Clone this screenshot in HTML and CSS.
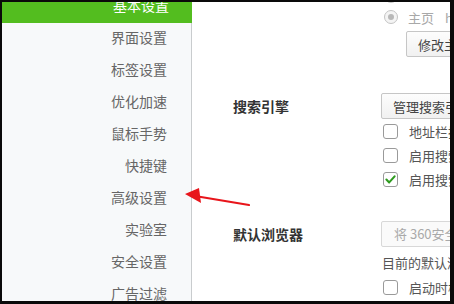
FILE: index.html
```html
<!DOCTYPE html>
<html lang="zh-CN">
<head>
<meta charset="utf-8">
<title>设置</title>
<link rel="stylesheet" href="styles.css">
</head>
<body>
<div class="screen">
  <nav class="sidebar">
    <ul class="menu">
      <li class="item active">基本设置</li>
      <li class="item">界面设置</li>
      <li class="item">标签设置</li>
      <li class="item">优化加速</li>
      <li class="item">鼠标手势</li>
      <li class="item">快捷键</li>
      <li class="item">高级设置</li>
      <li class="item">实验室</li>
      <li class="item">安全设置</li>
      <li class="item">广告过滤</li>
    </ul>
  </nav>
  <main class="main">
    <section class="row home">
      <div class="label"></div>
      <div class="controls">
        <div class="opt opt-cut"><span class="radio"></span></div>
        <div class="opt"><span class="radio on"></span><span class="opt-text muted">主页</span><span class="url muted">https://hao.360.cn/</span></div>
        <button class="btn btn-indent">修改主页</button>
      </div>
    </section>
    <section class="row search">
      <div class="label">搜索引擎</div>
      <div class="controls">
        <button class="btn">管理搜索引擎</button>
        <div class="opt"><span class="check"></span><span class="opt-text">地址栏搜索时显示搜索建议</span></div>
        <div class="opt"><span class="check"></span><span class="opt-text">启用搜索栏</span></div>
        <div class="opt"><span class="check"><svg viewBox="0 0 15 15" width="15" height="15"><path d="M3.4 7.6 L6.2 10.4 L11.6 4.4" fill="none" stroke="#2e9b1f" stroke-width="2.1" stroke-linecap="round" stroke-linejoin="round"/></svg></span><span class="opt-text">启用搜索建议</span></div>
      </div>
    </section>
    <section class="row browser">
      <div class="label">默认浏览器</div>
      <div class="controls">
        <div class="field">将 360安全浏览器设置为默认浏览器</div>
        <div class="note">目前的默认浏览器是 360安全浏览器</div>
        <div class="opt"><span class="check"></span><span class="opt-text">启动时检查是否为默认浏览器</span></div>
      </div>
    </section>
  </main>
  <svg class="arrow" width="260" height="220" viewBox="0 0 260 220">
    <line x1="193" y1="194" x2="247" y2="203" stroke="#e8151b" stroke-width="2.2" stroke-linecap="round"/>
    <polygon points="183,192 197,186 199,201" fill="#e8151b"/>
  </svg>
</div>
</body>
</html>
```

FILE: styles.css
```css
* { box-sizing: border-box; }
html, body { margin: 0; padding: 0; background: #0a0a0a; }
body { font-family: "Noto Sans CJK SC", "Liberation Sans", sans-serif; }

.screen {
  position: relative;
  width: 454px;
  height: 304px;
  border-style: solid;
  border-color: #0a0a0a;
  border-width: 2px 4px 3px 2px;
  background: #fff;
  display: flex;
  overflow: hidden;
}

.sidebar {
  width: 190px;
  flex: none;
  background: #f7f9fa;
  border-right: 1px solid #c9ccce;
}
.menu {
  list-style: none;
  margin: -13px 0 0 0;
  padding: 0;
}
.item {
  height: 32px;
  line-height: 32px;
  padding-right: 24px;
  text-align: right;
  font-size: 14px;
  color: #666;
  white-space: nowrap;
}
.item.active {
  background: #53bd1f;
  color: #fff;
  margin-right: -1px;
  padding-right: 23px;
  height: 34px;
  line-height: 32px;
  margin-bottom: -2px;
}

.main {
  flex: 1;
  min-width: 0;
  padding-left: 41px;
  display: flex;
  flex-direction: column;
}
.row {
  display: grid;
  grid-template-columns: 148px 400px;
  align-items: start;
}
.label {
  font-size: 14px;
  font-weight: bold;
  color: #333;
  height: 26px;
  line-height: 26px;
  white-space: nowrap;
}
.controls {
  display: flex;
  flex-direction: column;
  align-items: flex-start;
}

.home { margin-top: -18px; }
.home .label { height: 0; }
.search { margin-top: 36px; }
.browser { margin-top: 30px; }

.opt {
  height: 24px;
  display: flex;
  align-items: center;
  white-space: nowrap;
  font-size: 13px;
  color: #555;
}
.opt-cut { height: 21px; align-items: flex-end; }
.opt-cut .radio { margin-bottom: 2px; }
.opt-text { margin-left: 11px; }
.muted { color: #a8a8a8; }
.url { margin-left: 11px; }

.radio {
  width: 14px;
  height: 14px;
  margin-left: 3px;
  border: 1px solid #c4c4c4;
  border-radius: 50%;
  background: #f4f4f4;
  display: flex;
  align-items: center;
  justify-content: center;
  flex: none;
}
.radio.on::after {
  content: "";
  width: 6px;
  height: 6px;
  border-radius: 50%;
  background: #b8b8b8;
}
.opt .radio + .opt-text { margin-left: 10px; }

.check {
  width: 15px;
  height: 15px;
  margin-left: 2px;
  border: 1px solid #9a9a9a;
  border-radius: 3px;
  background: #fff;
  flex: none;
  position: relative;
}
.check svg { position: absolute; left: -1px; top: -1px; }

.btn {
  height: 26px;
  padding: 0 11px;
  font-family: inherit;
  font-size: 13px;
  color: #444;
  background: linear-gradient(#fdfdfd, #f1f1f1);
  border: 1px solid #c6c6c6;
  border-radius: 2px;
  white-space: nowrap;
  margin: 0;
}
.home .btn { margin-top: 2px; }
.btn-indent { margin-left: 25px; }

.field {
  height: 26px;
  width: 300px;
  line-height: 24px;
  padding-left: 12px;
  font-size: 13px;
  color: #a9a9a9;
  background: #fafafa;
  border: 1px solid #d8d8d8;
  border-radius: 2px;
  white-space: nowrap;
}
.note {
  margin-top: 4px;
  height: 24px;
  line-height: 24px;
  font-size: 13px;
  color: #555;
  padding-left: 1px;
  white-space: nowrap;
}

.arrow {
  position: absolute;
  left: 0;
  top: 0;
  pointer-events: none;
}
```
